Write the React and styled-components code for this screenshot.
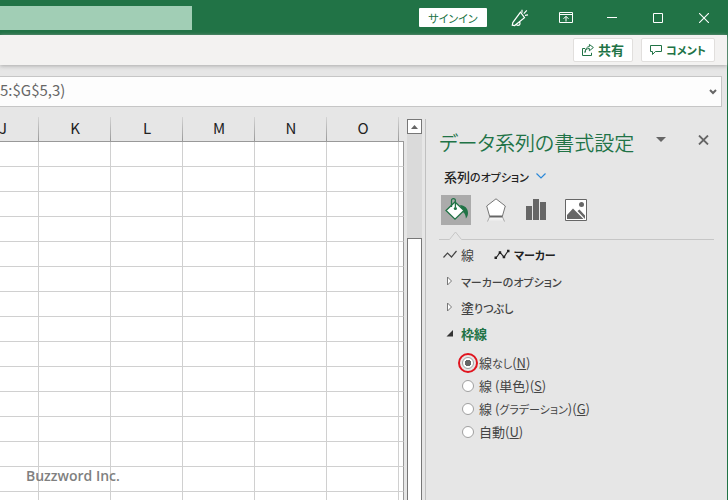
import React, { useState } from "react";
import styled, { createGlobalStyle, css } from "styled-components";

const GlobalStyle = createGlobalStyle`
  * { box-sizing: border-box; }
  body {
    margin: 0;
    font-family: "Noto Sans CJK JP", sans-serif;
    font-feature-settings: "palt";
    font-size: 13px;
    color: #333;
    background: #e6e6e6;
  }
  button, input { font: inherit; color: inherit; font-feature-settings: inherit; }
  button { margin: 0; padding: 0; border: 0; background: none; cursor: pointer; }
  svg { display: block; flex: none; }
`;

const Window = styled.div`
  display: flex;
  flex-direction: column;
  height: 100vh;
  overflow: hidden;
`;

const TitleBar = styled.header`
  display: flex;
  align-items: center;
  height: 35px;
  flex: none;
  background: #217346;
  color: #fff;
`;

const SearchBox = styled.input`
  width: 192px;
  height: 24px;
  border: 0;
  padding: 0 8px;
  background: #a1ceb5;
  outline: none;
`;

const TitleActions = styled.div`
  display: flex;
  align-items: center;
  margin: 0 1px 0 auto;
`;

const SignIn = styled.button`
  width: 68px;
  height: 19px;
  margin-right: 10px;
  border-radius: 1px;
  background: #fff;
  color: #217346;
  line-height: 18px;
`;

const CaptionButton = styled.button`
  display: grid;
  place-items: center;
  width: 46px;
  height: 35px;
`;

const Frame = styled.div`
  display: flex;
  flex-direction: column;
  flex: 1;
  min-height: 0;
  border-right: 1px solid #217346;
  background: #e6e6e6;
`;

const Ribbon = styled.div`
  display: flex;
  align-items: center;
  justify-content: flex-end;
  gap: 8px;
  height: 30px;
  flex: none;
  padding-right: 12px;
  background: #f3f2f1;
  box-shadow: 0 1px 4px #aaa;
`;

const RibbonButton = styled.button`
  display: flex;
  align-items: center;
  justify-content: center;
  gap: 4px;
  width: ${(p) => (p.$wide ? 74 : 60)}px;
  height: 24px;
  border: 1px solid #e1dfdd;
  border-radius: 2px;
  background: #fff;
  color: #217346;
  font-weight: 700;
  line-height: 22px;
`;

const FormulaBar = styled.div`
  display: flex;
  align-items: center;
  height: 31px;
  flex: none;
  margin: 11px 5px 0 0;
  padding-right: 4px;
  border: 1px solid #c6c6c6;
  border-left: 0;
  background: #fdfdfd;
`;

const FormulaInput = styled.input`
  flex: 1;
  min-width: 0;
  border: 0;
  padding: 0 0 4px;
  background: none;
  color: #666;
  font-size: 15px;
  outline: none;
`;

const Main = styled.main`
  display: flex;
  flex: 1;
  min-height: 0;
`;

const Sheet = styled.section`
  position: relative;
  display: flex;
  justify-content: flex-end;
  flex: 1;
  min-width: 0;
  overflow: hidden;
  padding-top: 10px;
`;

const Grid = styled.table`
  flex: none;
  width: 437px;
  height: max-content;
  table-layout: fixed;
  border-collapse: separate;
  border-spacing: 0;
`;

const Column = styled.col`
  width: ${(p) => (p.$edge ? 5 : 72)}px;
`;

const HeadCell = styled.th`
  height: 25px;
  padding: 0 0 2px;
  border-bottom: 1px solid #999;
  background: linear-gradient(#d4d4d4, #999) right / 1px 100% no-repeat;
  color: #222;
  font-size: 15px;
  font-weight: 400;
  line-height: 22px;
  &:last-child { background: none; }
`;

const Cell = styled.td`
  height: 25px;
  padding: 0;
  border-right: 1px solid #d0d0d0;
  border-bottom: 1px solid #d0d0d0;
  background: #fff;
  &:last-child { border-right-color: #999; }
`;

const Watermark = styled.span`
  position: absolute;
  left: 26px;
  bottom: 14px;
  color: #808080;
  font: 600 14px/20px "Open Sans", sans-serif;
`;

const ScrollBar = styled.div`
  display: flex;
  flex-direction: column;
  flex: none;
  width: 15px;
  margin: 12px 3px 0;
  background: #dadada;
`;

const ScrollUp = styled.button`
  display: grid;
  place-items: center;
  height: 15px;
  border: 1px solid #777;
  background: #fff;
`;

const Thumb = styled.div`
  flex: 1;
  margin-top: 104px;
  border: 1px solid #777;
  border-bottom: 0;
  background: #fff;
`;

const Pane = styled.aside`
  flex: none;
  width: 302px;
  margin-top: 12px;
  padding: 8px 13px 0;
  border-left: 1px solid #c0c0c0;
`;

const PaneHead = styled.div`
  display: flex;
  align-items: center;
  height: 32px;
`;

const PaneTitle = styled.h1`
  flex: 1;
  margin: 0;
  color: #217346;
  font-size: 20px;
  font-weight: 350;
  line-height: 32px;
  white-space: nowrap;
`;

const PaneTools = styled.div`
  display: flex;
  align-items: center;
  gap: 32px;
  margin: 0 5px 7px 0;
`;

const OptionsMenu = styled.button`
  display: flex;
  align-items: center;
  gap: 7px;
  height: 34px;
  padding-left: 5px;
  font-weight: 500;
  color: #222;
`;

const IconTabs = styled.div`
  display: flex;
  gap: 10px;
  margin: 2px 0 0 2px;
`;

const IconTab = styled.button`
  display: grid;
  place-items: center;
  width: 30px;
  height: 30px;
  background: ${(p) => (p.$active ? "#ababab" : "none")};
`;

const Divider = styled.div`
  display: flex;
  align-items: flex-end;
  height: 15px;
`;

const Rule = styled.span`
  height: 1px;
  background: #c6c6c6;
  ${(p) => (p.$fill ? css`flex: 1;` : css`width: 10px;`)}
`;

const SubTabs = styled.div`
  display: flex;
  gap: 20px;
  height: 29px;
  padding-left: 4px;
`;

const SubTab = styled.button`
  display: flex;
  align-items: center;
  gap: 4px;
  font-weight: ${(p) => (p.$active ? 700 : 400)};
  color: ${(p) => (p.$active ? "#222" : "#444")};
`;

const Section = styled.button`
  display: flex;
  align-items: center;
  gap: 6px;
  width: 100%;
  height: 26px;
  padding: 0 0 2px 6px;
  font-weight: ${(p) => (p.$open ? 700 : 500)};
  color: ${(p) => (p.$open ? "#217346" : "#444")};
`;

const Choices = styled.div`
  display: flex;
  flex-direction: column;
  padding: 4px 0 0 23px;
`;

const Choice = styled.label`
  display: flex;
  align-items: center;
  gap: 5px;
  height: 23px;
  color: #444;
  line-height: 23px;
`;

const Radio = styled.input`
  appearance: none;
  flex: none;
  width: 12px;
  height: 12px;
  margin: 0;
  border: 1px solid #a0a0a0;
  border-radius: 50%;
  background: #fff;
  &:checked {
    background: radial-gradient(circle, #666 0 3px, #fff 3px);
    outline: 2px solid #e0141e;
    outline-offset: 2px;
  }
`;

const Kana = styled.span`
  font-size: 11px;
`;

// Kana are set a size smaller than kanji, as in a compact UI face.
const Label = ({ children }) => (
  <span>
    {children.split(/([\u3041-\u30ff]+)/).map((part, i) =>
      i % 2 ? <Kana key={i}>{part}</Kana> : part
    )}
  </span>
);

const stroke = { fill: "none", stroke: "currentColor" };

const MegaphoneIcon = () => (
  <svg width="18" height="18" viewBox="0 0 18 18" {...stroke} strokeWidth="1.2">
    <path d="M9.5 3.2 1.8 13.6l-.5 2.6 2.4.3 9.8-7.9Z" />
    <path d="M5.2 15.1c.4 1.8 3.5 1.6 3.8-.3.2-1-.3-1.8-1-2M11 3.7V.8M12.8 4.6 15.8 1.4M14 6.4l3-.5" />
  </svg>
);
const DisplayIcon = () => (
  <svg width="14" height="12" viewBox="0 0 14 12" {...stroke}>
    <path d="M.5.5h13v10H.5ZM.5 2.5h13M7 9.5V4.5M4.5 6.8 7 4.3l2.5 2.5" />
  </svg>
);
const MinimizeIcon = () => (
  <svg width="10" height="10" viewBox="0 0 10 10" {...stroke}><path d="M0 4.5h10" /></svg>
);
const MaximizeIcon = () => (
  <svg width="10" height="10" viewBox="0 0 10 10" {...stroke}><path d="M.5.5h9v9h-9Z" /></svg>
);
const CloseIcon = () => (
  <svg width="10" height="10" viewBox="0 0 10 10" {...stroke} strokeWidth="1.1"><path d="m0 0 10 10M10 0 0 10" /></svg>
);
const ShareIcon = () => (
  <svg width="12" height="12" viewBox="0 0 12 12" {...stroke}>
    <path d="M3 4.5H.5v7h9V8.8M3 8.5C3.3 5.7 4.8 4.5 7.4 4.5v2.3l4-3.3-4-3v2C4.8 2.7 3.3 5 3 8.5Z" />
  </svg>
);
const CommentIcon = () => (
  <svg width="12" height="12" viewBox="0 0 12 12" {...stroke}>
    <path d="M.5 1.5h11v6H5.4L2.5 10.5v-3h-2Z" />
  </svg>
);
const FormulaChevron = () => (
  <svg width="8" height="6" viewBox="0 0 8 6" fill="none" stroke="#666" strokeWidth="2"><path d="m1 1 3 3 3-3" /></svg>
);
const UpArrow = () => (
  <svg width="7" height="4" viewBox="0 0 7 4" fill="#666"><path d="m3.5 0 3.5 4H0Z" /></svg>
);
const DownArrow = () => (
  <svg width="10" height="5" viewBox="0 0 10 5" fill="#666"><path d="M0 0h10L5 5Z" /></svg>
);
const PaneClose = () => (
  <svg width="11" height="10" viewBox="0 0 11 10" fill="none" stroke="#666" strokeWidth="1.8"><path d="m1 .5 9 9M10 .5l-9 9" /></svg>
);
const BlueChevron = () => (
  <svg width="10" height="6" viewBox="0 0 10 6" fill="none" stroke="#2b88d8" strokeWidth="1.2"><path d="m.5.5 4.5 4.5L9.5.5" /></svg>
);
const FillIcon = () => (
  <svg width="24" height="24" viewBox="0 0 24 24" fill="none" stroke="#217346">
    <path d="M16 7c4.6.2 8 3.4 8 8 0 2.2-.7 4-2.1 5.6-.2-3.1-.9-5.2-2.9-6.6Z" fill="#217346" stroke="none" />
    <path d="m11 4 9 8.5-9 8.6-9-8.6Z" fill="#fff" strokeWidth="1.3" />
    <path d="M7.5 9V2.7C7.5 1.2 8.2.7 9.4.7s2 .5 2 2v6.6" strokeWidth="1.3" />
    <circle cx="11.4" cy="10.5" r="1.6" fill="#217346" stroke="none" />
  </svg>
);
const EffectsIcon = () => (
  <svg width="22" height="24" viewBox="0 0 22 24">
    <defs>
      <linearGradient id="reflection" x1="0" y1="0" x2="0" y2="1">
        <stop offset="0" stopColor="#fff" />
        <stop offset="1" stopColor="#e6e6e6" />
      </linearGradient>
    </defs>
    <path d="M4.5 18.5h13l2 5h-17Z" fill="url(#reflection)" />
    <path d="m4.5 19-2 4.5M17.5 19l2 4.5" stroke="#aaa" fill="none" />
    <path d="M11 .8 20.3 8l-3 10.5H4.7L1.7 8Z" fill="#fff" stroke="#777" />
    <path d="M4.5 18.5h13" stroke="#666" strokeWidth="2" />
  </svg>
);
const BarsIcon = () => (
  <svg width="20" height="22" viewBox="0 0 20 22" fill="#666"><path d="M0 7h6v14H0ZM7 0h6v21H7ZM14 3h6v18h-6Z" /></svg>
);
const PictureIcon = () => (
  <svg width="22" height="22" viewBox="0 0 22 22">
    <path d="M.5.5h21v21H.5Z" fill="#fff" stroke="#666" />
    <circle cx="16.5" cy="5.5" r="2.5" fill="#666" />
    <path d="M2 20v-4l6-6.500 10.500 10.500ZM12.500 12l2-1.500 5.500 6v3.500Z" fill="#666" />
  </svg>
);
const Notch = () => (
  <svg width="13" height="9" viewBox="0 0 13 9" fill="none" stroke="#c6c6c6"><path d="M0 8.5h.5l6-7.5 6 7.5h.5" /></svg>
);
const LineIcon = () => (
  <svg width="14" height="9" viewBox="0 0 14 9" {...stroke} strokeWidth="1.2"><path d="m.5 7.5 4-4.500L8.500 7 13.500 1" /></svg>
);
const MarkerIcon = () => (
  <svg width="16" height="11" viewBox="0 0 16 11" {...stroke} strokeWidth="1.1">
    <path d="m2 9 4-5.500 4 4.500L14 2" />
    <path d="M.5 7.500h2.500v2.500H.5ZM4.700 2.200h2.500v2.500H4.700ZM8.700 6.800h2.500v2.500H8.700ZM13 .8h2.500v2.500H13Z" fill="currentColor" stroke="none" />
  </svg>
);
const Twisty = ({ open }) => (
  <svg width="10" height="10" viewBox="0 0 10 10">
    {open ? (
      <path d="M8 2v6.500H1.500Z" fill="#333" />
    ) : (
      <path d="M2.500 1v8l4-4Z" fill="#fff" stroke="#777" />
    )}
  </svg>
);

const columns = ["J", "K", "L", "M", "N", "O"];
const rows = Array.from({ length: 40 }, (_, i) => i);
const iconTabs = [
  { label: "塗りつぶしと線", Icon: FillIcon },
  { label: "効果", Icon: EffectsIcon },
  { label: "系列のオプション", Icon: BarsIcon },
  { label: "図", Icon: PictureIcon },
];
const choices = [
  { text: "線なし", key: "N" },
  { text: "線 (単色)", key: "S" },
  { text: "線 (グラデーション)", key: "G" },
  { text: "自動", key: "U" },
];

export default function App() {
  const [choice, setChoice] = useState("N");
  return (
    <>
      <GlobalStyle />
      <Window>
        <TitleBar>
          <SearchBox aria-label="検索" />
          <TitleActions>
            <SignIn><Label>サインイン</Label></SignIn>
            <CaptionButton aria-label="新機能"><MegaphoneIcon /></CaptionButton>
            <CaptionButton aria-label="リボンの表示オプション"><DisplayIcon /></CaptionButton>
            <CaptionButton aria-label="最小化"><MinimizeIcon /></CaptionButton>
            <CaptionButton aria-label="最大化"><MaximizeIcon /></CaptionButton>
            <CaptionButton aria-label="閉じる"><CloseIcon /></CaptionButton>
          </TitleActions>
        </TitleBar>
        <Frame>
          <Ribbon>
            <RibbonButton><ShareIcon />共有</RibbonButton>
            <RibbonButton $wide><CommentIcon /><Label>コメント</Label></RibbonButton>
          </Ribbon>
          <FormulaBar>
            <FormulaInput aria-label="数式バー" defaultValue="5:$G$5,3)" />
            <button aria-label="数式バーの展開"><FormulaChevron /></button>
          </FormulaBar>
          <Main>
            <Sheet>
              <Grid>
                <colgroup>
                  {columns.map((c) => <Column key={c} />)}
                  <Column $edge />
                </colgroup>
                <thead>
                  <tr>
                    {columns.map((c) => <HeadCell key={c} scope="col">{c}</HeadCell>)}
                    <HeadCell />
                  </tr>
                </thead>
                <tbody>
                  {rows.map((r) => (
                    <tr key={r}>
                      {columns.map((c) => <Cell key={c} />)}
                      <Cell />
                    </tr>
                  ))}
                </tbody>
              </Grid>
              <Watermark>Buzzword Inc.</Watermark>
            </Sheet>
            <ScrollBar>
              <ScrollUp aria-label="上へスクロール"><UpArrow /></ScrollUp>
              <Thumb />
            </ScrollBar>
            <Pane>
              <PaneHead>
                <PaneTitle>データ系列の書式設定</PaneTitle>
                <PaneTools>
                  <button aria-label="作業ウィンドウのオプション"><DownArrow /></button>
                  <button aria-label="作業ウィンドウを閉じる"><PaneClose /></button>
                </PaneTools>
              </PaneHead>
              <OptionsMenu><Label>系列のオプション</Label><BlueChevron /></OptionsMenu>
              <IconTabs>
                {iconTabs.map(({ label, Icon }, i) => (
                  <IconTab key={label} aria-label={label} $active={i === 0}><Icon /></IconTab>
                ))}
              </IconTabs>
              <Divider><Rule /><Notch /><Rule $fill /></Divider>
              <SubTabs>
                <SubTab><LineIcon />線</SubTab>
                <SubTab $active><MarkerIcon /><Label>マーカー</Label></SubTab>
              </SubTabs>
              <Section aria-expanded="false"><Twisty /><Label>マーカーのオプション</Label></Section>
              <Section aria-expanded="false"><Twisty /><Label>塗りつぶし</Label></Section>
              <Section aria-expanded="true" $open><Twisty open /><Label>枠線</Label></Section>
              <Choices>
                {choices.map(({ text, key }) => (
                  <Choice key={key}>
                    <Radio type="radio" name="border" checked={choice === key} onChange={() => setChoice(key)} />
                    <span><Label>{text}</Label>(<u>{key}</u>)</span>
                  </Choice>
                ))}
              </Choices>
            </Pane>
          </Main>
        </Frame>
      </Window>
    </>
  );
}
